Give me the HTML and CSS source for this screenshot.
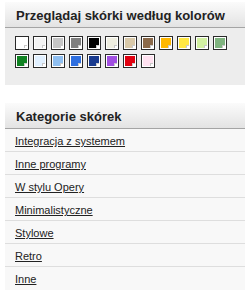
FILE: index.html
```html
<!DOCTYPE html>
<html>
<head>
    <meta charset="UTF-8">
    <meta name="viewport" content="width=device-width, initial-scale=1.0">
    <title>Skórki</title>
    <link rel="stylesheet" href="styles.css">
</head>
<body>
    <div class="panel colors-panel">
        <h2 class="panel-title">Przeglądaj skórki według kolorów</h2>
        <div class="swatches">
            <a href="#" class="swatch" style="background-color: #ffffff"></a>
            <a href="#" class="swatch" style="background-color: #f3f3f3"></a>
            <a href="#" class="swatch" style="background-color: #c6c6c6"></a>
            <a href="#" class="swatch" style="background-color: #7f7f7f"></a>
            <a href="#" class="swatch" style="background-color: #000000"></a>
            <a href="#" class="swatch" style="background-color: #efeee0"></a>
            <a href="#" class="swatch" style="background-color: #d9c9a9"></a>
            <a href="#" class="swatch" style="background-color: #8b6a4a"></a>
            <a href="#" class="swatch" style="background-color: #ffb700"></a>
            <a href="#" class="swatch" style="background-color: #ffe743"></a>
            <a href="#" class="swatch" style="background-color: #d2f0a2"></a>
            <a href="#" class="swatch" style="background-color: #7fb37f"></a>
            <a href="#" class="swatch" style="background-color: #108222"></a>
            <a href="#" class="swatch" style="background-color: #e1f0ff"></a>
            <a href="#" class="swatch" style="background-color: #8fbff1"></a>
            <a href="#" class="swatch" style="background-color: #2f6fdf"></a>
            <a href="#" class="swatch" style="background-color: #1a3b8f"></a>
            <a href="#" class="swatch" style="background-color: #a14fe1"></a>
            <a href="#" class="swatch" style="background-color: #e0000f"></a>
            <a href="#" class="swatch" style="background-color: #ffe1f0"></a>
        </div>
    </div>

    <div class="panel categories-panel">
        <h2 class="panel-title">Kategorie skórek</h2>
        <ul class="category-list">
            <li><a href="#">Integracja z systemem</a></li>
            <li><a href="#">Inne programy</a></li>
            <li><a href="#">W stylu Opery</a></li>
            <li><a href="#">Minimalistyczne</a></li>
            <li><a href="#">Stylowe</a></li>
            <li><a href="#">Retro</a></li>
            <li><a href="#">Inne</a></li>
        </ul>
    </div>
</body>
</html>
```

FILE: styles.css
```css
* {
    margin: 0;
    padding: 0;
    box-sizing: border-box;
}

body {
    font-family: 'Liberation Sans', Arial, sans-serif;
    background-color: #ffffff;
    color: #222;
    padding: 2px 5px 0 5px;
    width: 250px;
}

.panel {
    width: 240px;
}

.panel-title {
    height: 26px;
    padding: 6px 0 0 11px;
    font-size: 13px;
    font-weight: bold;
    color: #222;
    background: linear-gradient(to bottom, #fbfbfb, #e3e3e3);
    border-bottom: 1px solid #a4a4a4;
}

/* Блок кольорів */
.colors-panel {
    background-color: #ededed;
    padding-bottom: 17px;
}

.swatches {
    display: grid;
    grid-template-columns: repeat(12, 14px);
    gap: 4px;
    padding: 8px 0 0 10px;
}

.swatch {
    display: block;
    position: relative;
    width: 14px;
    height: 14px;
    border: 1px solid #2a2a2a;
    box-shadow: inset 0 0 0 1px #ffffff;
}

.swatch::after {
    content: '';
    position: absolute;
    right: 1px;
    bottom: 1px;
    width: 2px;
    height: 2px;
    box-sizing: content-box;
    background-color: #ffffff;
    border-left: 1px solid #c8c8c8;
    border-top: 1px solid #c8c8c8;
}

/* Категорії */
.categories-panel {
    margin-top: 18px;
}

.category-list {
    list-style: none;
}

.category-list li {
    height: 23px;
    padding: 6px 0 0 10px;
    background-color: #f8f8f8;
    border-bottom: 1px solid #dedede;
    font-size: 11px;
}

.category-list li:last-child {
    border-bottom: none;
}

.category-list a {
    color: #222;
}
```
